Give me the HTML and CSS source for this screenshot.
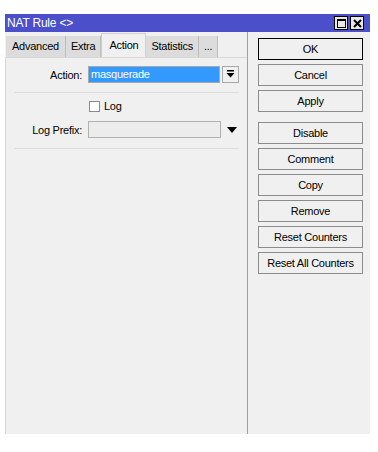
FILE: index.html
```html
<!DOCTYPE html>
<html>
<head>
<meta charset="utf-8">
<link rel="stylesheet" href="styles.css">
</head>
<body>
<div class="window">
  <div class="titlebar">
    <span class="title">NAT Rule &lt;&gt;</span>
    <div class="tbtns">
      <span class="tbtn"><svg width="11" height="11" viewBox="0 0 11 11"><rect x="1.5" y="1.5" width="8" height="8" fill="none" stroke="#000" stroke-width="1"/><line x1="1" y1="2" x2="10" y2="2" stroke="#000" stroke-width="2"/></svg></span>
      <span class="tbtn"><svg width="11" height="11" viewBox="0 0 11 11"><path d="M2 2 L9 9 M9 2 L2 9" stroke="#000" stroke-width="2"/></svg></span>
    </div>
  </div>
  <div class="body">
    <div class="left">
      <div class="tabs">
        <span class="tab">Advanced</span>
        <span class="tab">Extra</span>
        <span class="tab active">Action</span>
        <span class="tab">Statistics</span>
        <span class="tab">...</span>
      </div>
      <div class="panel">
        <div class="row">
          <span class="label">Action:</span>
          <span class="combo">masquerade</span>
          <span class="dd"><svg width="9" height="9" viewBox="0 0 9 9"><rect x="1" y="0" width="7" height="1.5" fill="#000"/><path d="M0.5 3 L8.5 3 L4.5 7.5 Z" fill="#000"/></svg></span>
        </div>
        <div class="sep first"></div>
        <div class="row chkrow">
          <span class="label"></span>
          <span class="chk"></span>
          <span class="chklabel">Log</span>
        </div>
        <div class="row">
          <span class="label">Log Prefix:</span>
          <span class="input"></span>
          <span class="arrow"><svg width="10" height="6" viewBox="0 0 10 6"><path d="M0 0 L10 0 L5 6 Z" fill="#000"/></svg></span>
        </div>
        <div class="sep last"></div>
      </div>
    </div>
    <div class="right">
      <div class="btn default">OK</div>
      <div class="btn">Cancel</div>
      <div class="btn">Apply</div>
      <div class="btn gap">Disable</div>
      <div class="btn">Comment</div>
      <div class="btn">Copy</div>
      <div class="btn">Remove</div>
      <div class="btn">Reset Counters</div>
      <div class="btn">Reset All Counters</div>
    </div>
  </div>
</div>
</body>
</html>
```
FILE: styles.css
```css
body {
  margin: 0;
  background: #ffffff;
  font-family: "Liberation Sans", Arial, sans-serif;
  font-size: 11px;
  letter-spacing: -0.25px;
  color: #000;
}
.window {
  margin: 14px 0 0 5px;
  width: 365px;
  height: 420px;
  display: flex;
  flex-direction: column;
  background: #f0f0f0;
}
.titlebar {
  height: 18px;
  background: #4b4fc9;
  display: flex;
  align-items: center;
  justify-content: space-between;
  padding: 0 2px 0 2px;
}
.title {
  color: #fff;
  font-size: 12px;
  letter-spacing: -0.2px;
}
.tbtns {
  display: flex;
  gap: 2px;
  margin-right: 4px;
}
.tbtn {
  width: 12px;
  height: 12px;
  background: #e8e8e8;
  border: 1px solid #000;
  display: flex;
  align-items: center;
  justify-content: center;
}
.body {
  flex: 1;
  display: flex;
}
.left {
  width: 242px;
  border-right: 1px solid #a0a0a0;
  display: flex;
  flex-direction: column;
}
.tabs {
  display: flex;
  align-items: flex-end;
  height: 25px;
  padding-left: 1px;
}
.tab {
  height: 21px;
  line-height: 21px;
  padding: 0 5px;
  background: #dcdcdc;
  border-right: 1px solid #bdbdbd;
  color: #000;
}
.tab:first-child {
  padding: 0 6px;
}
.tab.active {
  height: 23px;
  line-height: 22px;
  background: #f0f0f0;
  border: 1px solid #d0d0d0;
  border-bottom: none;
  padding: 0 7px;
}
.panel {
  flex: 1;
  border-left: 1px solid #d8d8d8;
  border-top: 1px solid #d8d8d8;
  padding: 8px 8px 0 7px;
}
.row {
  display: flex;
  align-items: center;
  height: 17px;
}
.label {
  width: 69px;
  text-align: right;
  padding-right: 6px;
  color: #000;
}
.combo {
  width: 128px;
  height: 15px;
  line-height: 15px;
  background: #3399ff;
  color: #fff;
  border: 1px solid #a8a8a8;
  padding-left: 2px;
}
.dd {
  margin-left: 2px;
  width: 15px;
  height: 15px;
  border: 1px solid #a8a8a8;
  background: #f0f0f0;
  display: flex;
  align-items: center;
  justify-content: center;
}
.sep {
  height: 1px;
  background: #dcdcdc;
  margin: 9px 0 7px 1px;
}
.sep.last {
  margin-top: 10px;
}
.chkrow {
  height: 12px;
  margin-bottom: 9px;
}
.chk {
  width: 11px;
  height: 11px;
  border: 1px solid #8a8a8a;
  background: #fff;
  box-sizing: border-box;
  margin-left: 1px;
}
.chklabel {
  margin-left: 4px;
}
.input {
  width: 131px;
  height: 15px;
  border: 1px solid #b0b0b0;
  background: #ececec;
}
.arrow {
  margin-left: 6px;
  display: flex;
  align-items: center;
}
.right {
  display: flex;
  flex-direction: column;
  gap: 4px;
  padding: 6px 0 0 10px;
}
.btn {
  width: 103px;
  height: 20px;
  line-height: 20px;
  text-align: center;
  border: 1px solid #8c8c8c;
  background: #f0f0f0;
}
.btn.default {
  border: 1px solid #000;
}
.btn.gap {
  margin-top: 6px;
}
```
